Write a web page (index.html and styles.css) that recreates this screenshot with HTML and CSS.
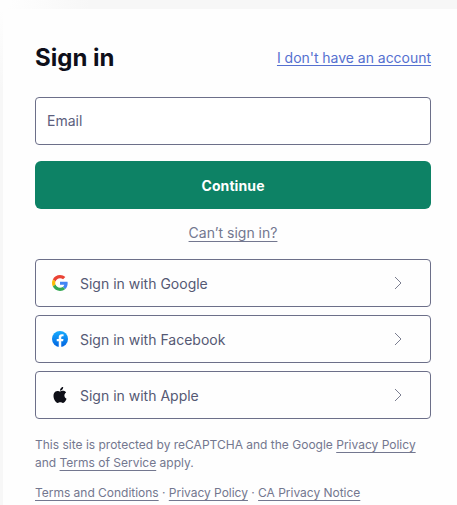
FILE: index.html
```html
<!DOCTYPE html>
<html lang="en">
<head>
    <meta charset="UTF-8">
    <meta name="viewport" content="width=device-width, initial-scale=1.0">
    <title>Sign in</title>
    <link rel="stylesheet" href="styles.css">
</head>
<body>

<main class="card">
    <header>
        <h1>Sign in</h1>
        <a class="signup" href="#">I don't have an account</a>
    </header>

    <form>
        <input type="email" placeholder="Email" aria-label="Email">
        <button class="continue" type="submit">Continue</button>
    </form>

    <a class="help" href="#">Can’t sign in?</a>

    <div class="providers">
        <a class="provider" href="#">
            <svg class="logo" viewBox="0 0 48 48">
                <path fill="#EA4335" d="M24 9.5c3.54 0 6.71 1.22 9.21 3.6l6.85-6.85C35.9 2.38 30.47 0 24 0 14.62 0 6.51 5.38 2.56 13.22l7.98 6.19C12.43 13.72 17.74 9.5 24 9.5z"/>
                <path fill="#4285F4" d="M46.98 24.55c0-1.57-.15-3.09-.38-4.55H24v9.02h12.94c-.58 2.96-2.26 5.48-4.78 7.18l7.73 6c4.51-4.18 7.09-10.36 7.09-17.65z"/>
                <path fill="#FBBC05" d="M10.53 28.59c-.48-1.45-.76-2.99-.76-4.59s.27-3.14.76-4.59l-7.98-6.19C.92 16.46 0 20.12 0 24s.92 7.54 2.56 10.78l7.97-6.19z"/>
                <path fill="#34A853" d="M24 48c6.48 0 11.93-2.13 15.89-5.81l-7.73-6c-2.15 1.45-4.92 2.3-8.16 2.3-6.26 0-11.57-4.22-13.47-9.91l-7.98 6.19C6.51 42.62 14.62 48 24 48z"/>
            </svg>
            <span>Sign in with Google</span>
            <svg class="chevron" viewBox="0 0 8 14"><path d="M1 1l6 6-6 6"/></svg>
        </a>
        <a class="provider" href="#">
            <svg class="logo" viewBox="0 0 24 24">
                <defs>
                    <linearGradient id="fb" x1="0" y1="0" x2="0" y2="1">
                        <stop offset="0" stop-color="#18acfe"/>
                        <stop offset="1" stop-color="#0163e0"/>
                    </linearGradient>
                </defs>
                <circle cx="12" cy="12" r="12" fill="url(#fb)"/>
                <path fill="#fff" d="M16.67 15.47l.53-3.47h-3.33V9.75c0-.95.47-1.88 1.96-1.88h1.51V4.92s-1.37-.23-2.69-.23c-2.74 0-4.53 1.66-4.53 4.67V12H7.08v3.47h3.04v8.39a12 12 0 0 0 3.75 0v-8.39z"/>
            </svg>
            <span>Sign in with Facebook</span>
            <svg class="chevron" viewBox="0 0 8 14"><path d="M1 1l6 6-6 6"/></svg>
        </a>
        <a class="provider" href="#">
            <svg class="logo" viewBox="0 0 24 24">
                <path fill="#0e0f17" d="M12.152 6.896c-.948 0-2.415-1.078-3.96-1.04-2.04.027-3.91 1.183-4.961 3.014-2.117 3.675-.546 9.103 1.519 12.09 1.013 1.454 2.208 3.09 3.792 3.039 1.52-.065 2.09-.987 3.935-.987 1.831 0 2.35.987 3.96.948 1.637-.026 2.676-1.48 3.676-2.948 1.156-1.688 1.636-3.325 1.662-3.415-.039-.013-3.182-1.221-3.22-4.857-.026-3.04 2.48-4.494 2.597-4.559-1.429-2.09-3.623-2.324-4.39-2.376-2-.156-3.675 1.09-4.61 1.09zM15.53 3.83c.843-1.012 1.4-2.427 1.245-3.83-1.207.052-2.662.805-3.532 1.818-.78.896-1.454 2.338-1.273 3.714 1.338.104 2.715-.688 3.559-1.701"/>
            </svg>
            <span>Sign in with Apple</span>
            <svg class="chevron" viewBox="0 0 8 14"><path d="M1 1l6 6-6 6"/></svg>
        </a>
    </div>

    <footer>
        <p>This site is protected by reCAPTCHA and the Google <a href="#">Privacy Policy</a> and <a href="#">Terms of Service</a> apply.</p>
        <p><a href="#">Terms and Conditions</a> · <a href="#">Privacy Policy</a> · <a href="#">CA Privacy Notice</a></p>
    </footer>
</main>

</body>
</html>
```
FILE: styles.css
```css
* {
    box-sizing: border-box;
}

body {
    font-family: Inter, "Liberation Sans", sans-serif;
    font-size: 14px;
    /* Backdrop fades out towards the top left corner */
    background: radial-gradient(circle at 0 0, #fefefe 10px, #f7f7f7 90px);
    color: #4b4f6b;
    margin: 0;
    padding: 9px 0 0 3px;
    overflow: hidden;
}

.card {
    background: #fefefe;
    min-height: 496px;
    padding: 33px 26px 0 32px;
}

header {
    display: flex;
    justify-content: space-between;
    align-items: center;
    height: 32px;
    margin-bottom: 23px;
}

h1 {
    font-size: 24px;
    line-height: 32px;
    color: #0e0f1a;
    margin: 0;
}

a {
    text-underline-offset: 3px;
}

.signup {
    color: #5570d0;
    line-height: 24px;
    letter-spacing: -0.03px;
    text-underline-offset: 2px;
}

form {
    display: flex;
    flex-direction: column;
    gap: 16px;
}

input {
    height: 48px;
    padding: 0 11px 2px;
    border: 1px solid #6c6f89;
    border-radius: 4px;
    background: #fff;
    font: inherit;
}

input::placeholder {
    color: #5c607d;
}

.continue {
    height: 48px;
    border: none;
    border-radius: 6px;
    background: #0d8265; /* Green */
    color: #fff;
    font: inherit;
    font-weight: 700;
    letter-spacing: 0.1px;
}

.help {
    display: block;
    width: fit-content;
    margin: 12px auto 14px;
    line-height: 24px;
    color: #73778f;
}

.providers {
    display: grid;
    gap: 8px;
}

.provider {
    display: flex;
    align-items: center;
    height: 48px;
    padding: 0 28px 0 16px;
    border: 1px solid #6c6f89;
    border-radius: 4px;
    color: #555974;
    text-decoration: none;
}

.provider span {
    flex: 1;
    margin-left: 12px;
}

.logo {
    width: 16px;
    height: 16px;
}

.chevron {
    width: 8px;
    height: 14px;
    fill: none;
    stroke: #7b7e90;
}

footer {
    margin-top: 17px;
    font-size: 12px;
    line-height: 18px;
    color: #73778f;
}

footer p {
    margin: 0 0 12px;
}

footer a {
    color: inherit;
}

footer p:last-child {
    letter-spacing: -0.02px;
}
```
